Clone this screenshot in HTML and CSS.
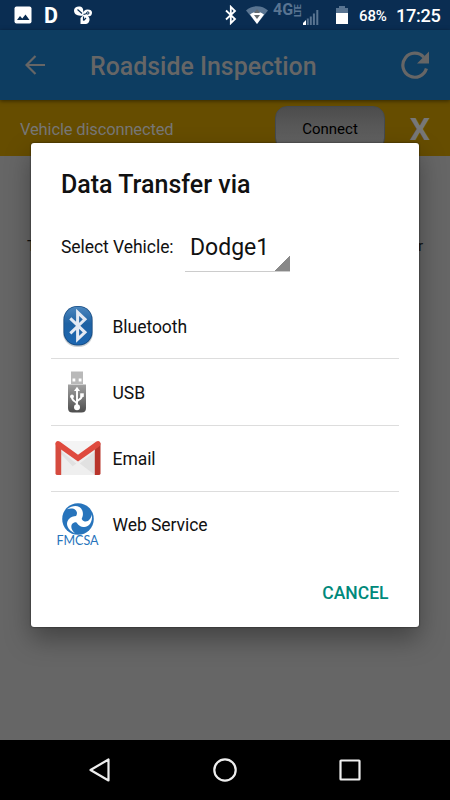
FILE: index.html
```html
<!DOCTYPE html>
<html lang="en">
<head>
	<meta charset="UTF-8">
	<title>Roadside Inspection</title>
	<link rel="stylesheet" href="styles.css">
</head>
<body>
	<div class="phone">
		<div class="status">
			<svg class="s-photo" width="18" height="18" viewBox="0 0 18 18">
				<rect x="0.500" y="0.500" width="17" height="17" rx="2" fill="#fff"/>
				<path d="M3 14l3-4 2.300 2.400L11.500 8.500l4 5.500z" fill="#0a2d52"/>
			</svg>
			<span class="s-d">D</span>
			<svg class="s-fan" width="18" height="18" viewBox="0 0 18 18">
				<path d="M9 9.500C3 10.500 0 8 0 4.500 0 1 4-.3 7 .8 9.500 2 9.500 5 9 8c0-3 2-4.500 4.500-4.500 4 0 5 2 4.300 4.500-.8 2.500-2.500 2-3.800 2.500 1.500 1 1.800 2.500 1.300 4.500-.6 2.500-2.500 3-5 3H6.500v-6z" fill="#fff"/>
				<path d="M3.500 3.500l4.500 4M9.500 8.500l3.500-1M9.500 10.500v4M9.500 14.500l2.500-2.500" stroke="#0a2d52" stroke-width="1.200" fill="none"/>
				<circle cx="13.800" cy="7" r="1.200" fill="none" stroke="#0a2d52"/>
			</svg>
			<div class="fr">
				<svg class="s-bt" width="12" height="20" viewBox="0 0 12 20">
					<path d="M1 5.500l9 8.500-4.200 4.200V1.800L10 6l-9 8.500" fill="none" stroke="#fff" stroke-width="1.800"/>
				</svg>
				<svg class="s-wifi" width="22" height="18" viewBox="0 0 22 18">
					<path d="M0 4.500C6-1.200 16-1.200 22 4.500L11 18z" fill="#597491"/>
					<path d="M4 8.500c4-3.300 10-3.300 14 0L11 18z" fill="#fff"/>
					<path d="M8 7l3-4 3 4zM8 9h6l-3 4z" fill="#646b70"/>
				</svg>
				<span class="s-4g">4G</span>
				<span class="s-lte">LTE</span>
				<svg class="s-signal" width="16" height="16" viewBox="0 0 16 16">
					<path d="M0 16v-2l3-3v5z" fill="#fff"/>
					<path d="M3.800 16V9.500h2V16zM6.800 16V7.500h2V16zM9.900 16V4.500h2V16zM13.300 16V1h2v15z" fill="#597491"/>
				</svg>
				<svg class="s-battery" width="12" height="18" viewBox="0 0 12 18">
					<path d="M0 2h3V0h6v2h3v6H0z" fill="#597491"/>
					<path d="M0 7h12v11H0z" fill="#fff"/>
				</svg>
				<span class="s-percent">68%</span>
				<span class="s-time">17:25</span>
			</div>
		</div>

		<div class="toolbar">
			<svg class="back" width="20" height="20" viewBox="0 0 20 20">
				<path d="M20 10H1.500M10.500 1L1.500 10l9 9" fill="none" stroke="#666" stroke-width="2.200"/>
			</svg>
			<h1>Roadside Inspection</h1>
			<svg class="refresh" width="28" height="28" viewBox="0 0 28 28">
				<path d="M22.800 6.200A12 12 0 1 0 25.400 17.500" fill="none" stroke="#666" stroke-width="3.200"/>
				<path d="M28 .5v12H16z" fill="#666"/>
			</svg>
		</div>

		<div class="notice">
			<span class="notice-text">Vehicle disconnected</span>
			<div class="connect">Connect</div>
			<span class="close">X</span>
		</div>

		<div class="content">
			<span>T</span>
			<span>r</span>
		</div>

		<div class="nav">
			<svg width="26" height="26" viewBox="0 0 26 26">
				<path d="M21.500 2.500v21L3.500 13z"/>
			</svg>
			<svg width="26" height="26" viewBox="0 0 26 26">
				<circle cx="13" cy="13" r="10.700"/>
			</svg>
			<svg width="26" height="26" viewBox="0 0 26 26">
				<rect x="3.500" y="3.500" width="19" height="19" rx="0.500"/>
			</svg>
		</div>

		<div class="dialog">
			<h2>Data Transfer via</h2>
			<div class="vehicle">
				<span class="label">Select Vehicle:</span>
				<div class="spinner">Dodge1</div>
			</div>
			<ul class="list">
				<li>
					<span class="icon">
						<svg width="32" height="44" viewBox="0 0 32 44">
							<defs>
								<linearGradient id="btblue" x1="0" y1="0" x2="0" y2="1">
									<stop offset="0" stop-color="#4b86bd"/>
									<stop offset="0.450" stop-color="#1f62a3"/>
									<stop offset="1" stop-color="#1c67b2"/>
								</linearGradient>
							</defs>
							<rect x="1" y="3" width="30" height="40" rx="14" fill="#a9b0b8" opacity="0.600"/>
							<rect x="1.500" y="2" width="29" height="39.500" rx="13.500" fill="#174d85"/>
							<rect x="2.300" y="2.800" width="27.400" height="37.600" rx="12.800" fill="url(#btblue)"/>
							<path d="M8.300 14.300l14.700 14-7.400 7V8.300l7.400 7-14.700 14" fill="none" stroke="#e4eaf3" stroke-width="3"/>
						</svg>
					</span>
					<span class="name">Bluetooth</span>
				</li>
				<li>
					<span class="icon usb">
						<svg width="20" height="42" viewBox="0 0 20 42">
							<defs>
								<linearGradient id="usbgray" x1="0" y1="0" x2="0" y2="1">
									<stop offset="0" stop-color="#a2a2a2"/>
									<stop offset="1" stop-color="#4d4d4d"/>
								</linearGradient>
							</defs>
							<rect x="4" y="0.500" width="12" height="12.500" fill="#b9b9b9"/>
							<path d="M5.500 7.500h2.800v3H5.500zM11.700 7.500h2.800v3h-2.800z" fill="#fff"/>
							<path d="M1 13.500h18v23.500q0 4.500-4.500 4.500h-9Q1 41.500 1 37z" fill="url(#usbgray)"/>
							<path d="M10 36V19M10 33.500c0-4-5-2-5-7.500M10 31.500c0-4 5-1.500 5-7.500" fill="none" stroke="#fff" stroke-width="1.900"/>
							<path d="M7 20l3-4.200 3 4.200z" fill="#fff"/>
							<circle cx="10" cy="36.300" r="3" fill="#fff"/>
							<circle cx="5" cy="25.500" r="1.900" fill="#fff"/>
							<rect x="13.200" y="22.300" width="3.600" height="3.600" fill="#fff"/>
						</svg>
					</span>
					<span class="name">USB</span>
				</li>
				<li>
					<span class="icon">
						<svg width="46" height="36" viewBox="0 0 46 36">
							<path d="M3 1h40v34H3z" fill="#eee"/>
							<path d="M6 11l17 14L43 9v26H26L6 14z" fill="#e1e1e1"/>
							<path d="M6 35l16-12 1.500-.5L40 35z" fill="#efefef"/>
							<path d="M3 1h40L23 15z" fill="#f4f4f4"/>
							<path d="M.5 3v30.500Q.5 35 2.500 35H6.200V9.500z" fill="#d54b3f"/>
							<path d="M45.500 3v30.500q0 1.500-2 1.500h-3.700V9.500z" fill="#b8342b"/>
							<path d="M.5 3.500C.5 1 3 .2 5 1.700L23 14.800 41 1.700c2-1.500 4.500-.7 4.500 1.800q0 2-2 3.500L23 21.500 2.500 7q-2-1.500-2-3.500z" fill="#df4a3e"/>
						</svg>
					</span>
					<span class="name">Email</span>
				</li>
				<li>
					<span class="icon fmcsa">
						<svg width="32" height="32" viewBox="0 0 32 32">
							<circle cx="16" cy="16" r="15.800" fill="#2774bc"/>
							<g fill="#fff">
								<path id="blade" d="M18.500 17.500C20.500 14.500 21.800 11.500 20.300 7.500 18.300 2.500 11.500 1.300 5 6.300 9 4.800 13.800 5.500 14.800 9c.8 3-1.300 4.500-2.800 7z"/>
								<use href="#blade" transform="rotate(120 16 16)"/>
								<use href="#blade" transform="rotate(240 16 16)"/>
							</g>
						</svg>
						<b>FMCSA</b>
					</span>
					<span class="name">Web Service</span>
				</li>
			</ul>
			<div class="cancel">CANCEL</div>
		</div>
	</div>
</body>
</html>
```
FILE: styles.css
```css
* {
	margin: 0;
	padding: 0;
	box-sizing: border-box;
}
body {
	font-family: Roboto, "Liberation Sans", sans-serif;
	background-color: #666;
}
svg {
	display: block;
	flex: none;
}
.phone {
	position: relative;
	width: 450px;
	height: 800px;
	overflow: hidden;
	display: flex;
	flex-direction: column;
}

/* status bar */
.status {
	height: 30px;
	padding: 0 10px 0 14px;
	display: flex;
	align-items: center;
	background-color: #0a2d52;
	color: #fff;
	white-space: nowrap;
}
.s-d {
	width: 15px;
	margin-left: 12px;
	padding-top: 1px;
	font-size: 21.5px;
	font-weight: 700;
	line-height: 29px;
}
.s-fan {
	margin-left: 15px;
}
.fr {
	margin-left: auto;
	display: flex;
	align-items: center;
}
.s-wifi {
	margin-left: 9px;
}
.s-4g {
	width: 21px;
	height: 22px;
	margin-left: 5px;
	font-size: 16px;
	line-height: 12px;
	font-weight: 700;
	color: #597491;
}
.s-lte {
	width: 8px;
	height: 22px;
	padding-top: 9px;
	font-size: 9px;
	line-height: 8px;
	font-weight: 700;
	letter-spacing: -0.8px;
	writing-mode: vertical-rl;
	transform: rotate(180deg);
	color: #597491;
}
.s-signal {
	margin: 3px 0 0 1px;
}
.s-battery {
	margin-left: 17px;
}
.s-percent {
	width: 28px;
	margin-left: 11px;
	padding-top: 2px;
	font-size: 15px;
	font-weight: 500;
	letter-spacing: -0.1px;
}
.s-time {
	width: 44px;
	margin-left: 9px;
	padding-top: 1px;
	font-size: 18.2px;
	font-weight: 500;
	letter-spacing: -0.3px;
}

/* toolbar */
.toolbar {
	position: relative;
	height: 70px;
	padding: 0 21px 0 25px;
	display: flex;
	align-items: center;
	background-color: #0d3d61;
	box-shadow: 0 1px 4px rgba(0, 0, 0, .5);
	color: #666;
}
.toolbar h1 {
	margin: 2px 0 0 45px;
	font-size: 24.9px;
	font-weight: 500;
	white-space: nowrap;
}
.refresh {
	margin-left: auto;
	margin-top: -1px;
}

.notice {
	height: 56px;
	padding: 6px 20px 0 20px;
	display: flex;
	background-color: #664d00;
}
.notice-text {
	width: 255px;
	font-size: 16.5px;
	letter-spacing: -0.15px;
	line-height: 47px;
	color: #777;
}
.connect {
	width: 110px;
	height: 44px;
	border: 1px solid #444a50;
	border-radius: 12px;
	background: linear-gradient(#4c4c4c, #666);
	font-size: 15px;
	line-height: 44px;
	text-align: center;
	color: #000;
}
.close {
	margin-left: auto;
	font-size: 32px;
	font-weight: 700;
	line-height: 46px;
	color: #777;
}
.content {
	flex: 1;
	padding: 81px 27px 0;
	display: flex;
	justify-content: space-between;
	font-size: 15px;
	color: #111;
}

/* system buttons */
.nav {
	height: 60px;
	display: flex;
	justify-content: center;
	align-items: center;
	gap: 99px;
	background-color: #000;
}
.nav svg {
	fill: none;
	stroke: #eee;
	stroke-width: 2.2;
	stroke-linejoin: round;
}

/* dialog */
.dialog {
	position: absolute;
	left: 31px;
	top: 143px;
	width: 387.5px;
	height: 484px;
	padding: 25px 20px 0;
	border-radius: 3px;
	background-color: #fff;
	box-shadow: 0 12px 26px rgba(0, 0, 0, .35), 0 0 2px rgba(0, 0, 0, .7);
	color: #111;
}
.dialog h2 {
	padding-left: 10px;
	font-size: 25px;
	font-weight: 500;
	line-height: 33px;
}
.vehicle {
	height: 50px;
	margin-top: 21px;
	padding-left: 10px;
	display: flex;
}
.vehicle .label {
	width: 124px;
	font-size: 17.5px;
	letter-spacing: -0.05px;
	line-height: 50px;
}
.spinner {
	width: 105px;
	height: 50px;
	padding-left: 5px;
	border-bottom: 1px solid #ccc;
	background: linear-gradient(135deg, transparent 50%, #888 50%) right bottom / 15px 15px no-repeat;
	font-size: 23px;
	line-height: 51px;
}
.list {
	margin-top: 21px;
	list-style: none;
}
.list li {
	height: 66.3px;
	display: flex;
	align-items: center;
	border-bottom: 1.5px solid #ddd;
	font-size: 17.5px;
	letter-spacing: -0.05px;
}
.list li:last-child {
	border-bottom: 0;
}
.icon {
	width: 53px;
	margin-right: 8.5px;
	display: flex;
	flex-direction: column;
	align-items: center;
}
.usb {
	padding-right: 2px;
}
.name {
	padding-top: 2px;
}
.list li:last-child .name {
	padding-top: 0;
}
.fmcsa b {
	height: 12px;
	font-family: Lato, sans-serif;
	font-size: 12.5px;
	font-weight: 400;
	letter-spacing: 0;
	line-height: 12px;
	color: #2774bc;
}
.cancel {
	margin-top: 25px;
	padding-right: 10px;
	text-align: right;
	font-size: 17.5px;
	font-weight: 500;
	color: #00897b;
}
```
